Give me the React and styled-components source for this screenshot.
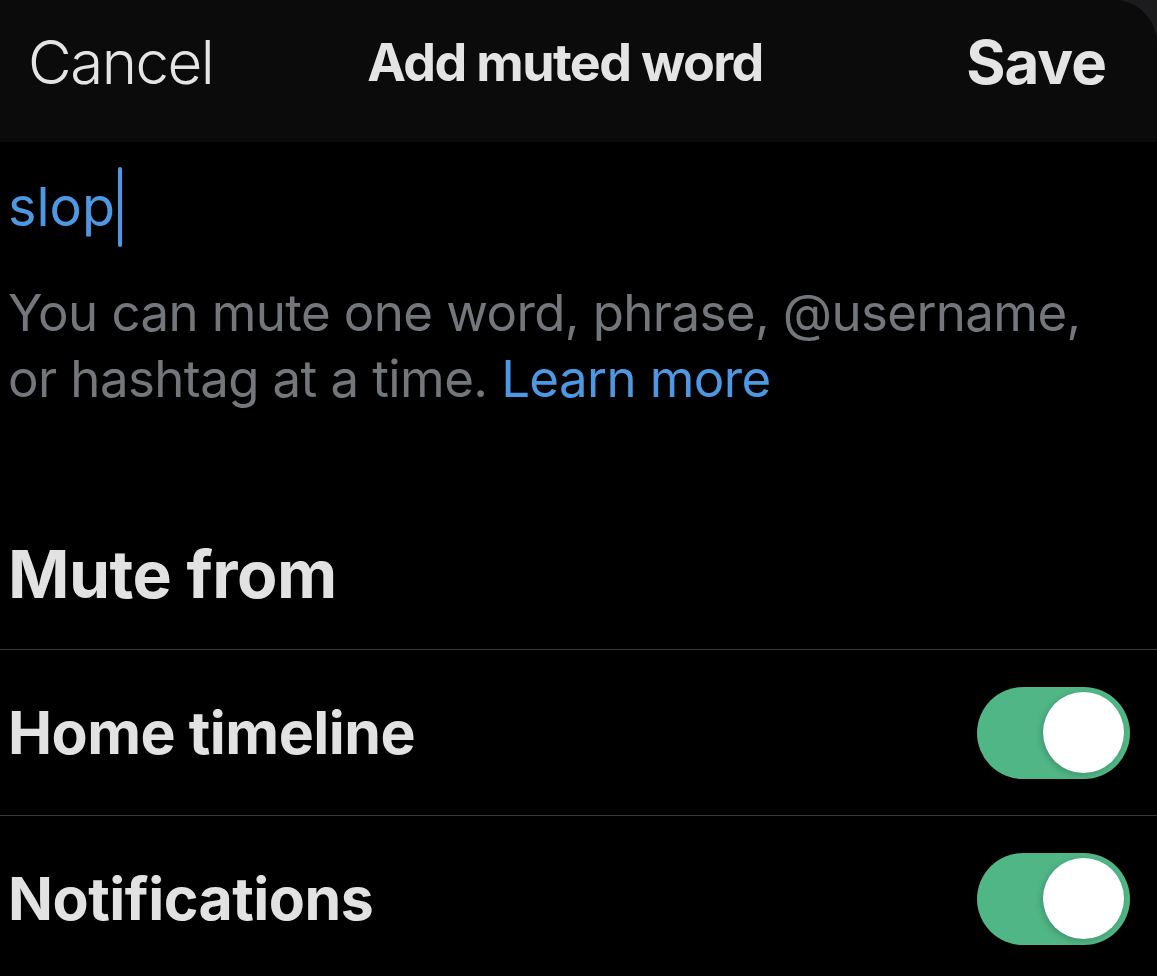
import styled, { createGlobalStyle } from "styled-components";

const GlobalStyle = createGlobalStyle`
  html, body {
    margin: 0;
    padding: 0;
    background: #1c1c1e;
  }
  body {
    font-family: Inter, "Noto Sans", sans-serif;
    -webkit-font-smoothing: antialiased;
  }
`;

const rows = [
  { id: "home", label: "Home timeline", on: true },
  { id: "notifications", label: "Notifications", on: true },
];

const App = () => {
  return (
    <>
      <GlobalStyle />
      <Sheet>
        <Header>
          <HeaderButton>Cancel</HeaderButton>
          <Title>Add muted word</Title>
          <HeaderButton $bold $right>
            Save
          </HeaderButton>
        </Header>
        <Body>
          <InputLine>
            slop<Caret />
          </InputLine>
          <Hint>
            You can mute one word, phrase, @username,
            <br />
            or hashtag at a time. <a>Learn more</a>
          </Hint>
          <SectionTitle>Mute from</SectionTitle>
        </Body>
        <List>
          {rows.map((row) => (
            <Row key={row.id}>
              <RowLabel>{row.label}</RowLabel>
              <Toggle $on={row.on}>
                <Thumb />
              </Toggle>
            </Row>
          ))}
        </List>
      </Sheet>
    </>
  );
};

export default App;

const Sheet = styled.div`
  width: 1157px;
  height: 976px;
  background: #000;
  border-top-right-radius: 44px;
  overflow: hidden;
  display: flex;
  flex-direction: column;
`;

const Header = styled.div`
  height: 142px;
  flex-shrink: 0;
  background: #0b0b0b;
  display: grid;
  grid-template-columns: 1fr auto 1fr;
  align-items: center;
  padding: 0 51px 0 28px;
  box-sizing: border-box;
`;

const HeaderButton = styled.span`
  font-size: 60px;
  font-weight: ${(p) => (p.$bold ? 700 : 300)};
  color: #e4e4e4;
  letter-spacing: ${(p) => (p.$bold ? "-1px" : "-1.5px")};
  justify-self: ${(p) => (p.$right ? "end" : "start")};
  margin-top: -18px;
`;

const Title = styled.span`
  font-size: 52px;
  font-weight: 700;
  color: #e4e4e4;
  letter-spacing: -1.6px;
  margin-top: -18px;
  margin-right: 4px;
`;

const Body = styled.div`
  padding: 0 0 0 8px;
`;

const InputLine = styled.div`
  margin-top: 25px;
  font-size: 54px;
  line-height: 80px;
  color: #4c98e3;
  display: flex;
  align-items: center;
`;

const Caret = styled.span`
  display: inline-block;
  width: 4px;
  height: 80px;
  border-radius: 2px;
  background: #4c98e3;
  margin-left: 3px;
`;

const Hint = styled.p`
  margin: 33px 0 0;
  font-size: 51px;
  line-height: 66px;
  letter-spacing: -0.6px;
  color: #73777c;
  white-space: nowrap;

  a {
    color: #4c98e3;
  }
`;

const SectionTitle = styled.h2`
  margin: 122px 0 0;
  font-size: 66px;
  line-height: 80px;
  font-weight: 700;
  color: #e2e2e2;
  letter-spacing: -0.5px;
`;

const List = styled.div`
  margin-top: 35px;
  border-top: 1px solid #3a3a3c;
`;

const Row = styled.div`
  height: 166px;
  display: flex;
  align-items: center;
  justify-content: space-between;
  padding: 0 27px 0 8px;
  border-bottom: 1px solid #3a3a3c;
  box-sizing: border-box;
`;

const RowLabel = styled.span`
  font-size: 59px;
  font-weight: 700;
  color: #e2e2e2;
  letter-spacing: -0.5px;
`;

const Toggle = styled.div`
  width: 153px;
  height: 92px;
  border-radius: 46px;
  background: ${(p) => (p.$on ? "#50b685" : "#3a3a3c")};
  display: flex;
  align-items: center;
  justify-content: ${(p) => (p.$on ? "flex-end" : "flex-start")};
  padding: 0 6px;
  box-sizing: border-box;
`;

const Thumb = styled.div`
  width: 81px;
  height: 81px;
  border-radius: 50%;
  background: #fff;
  box-shadow: -2px 2px 6px rgba(0, 0, 0, 0.18);
`;
